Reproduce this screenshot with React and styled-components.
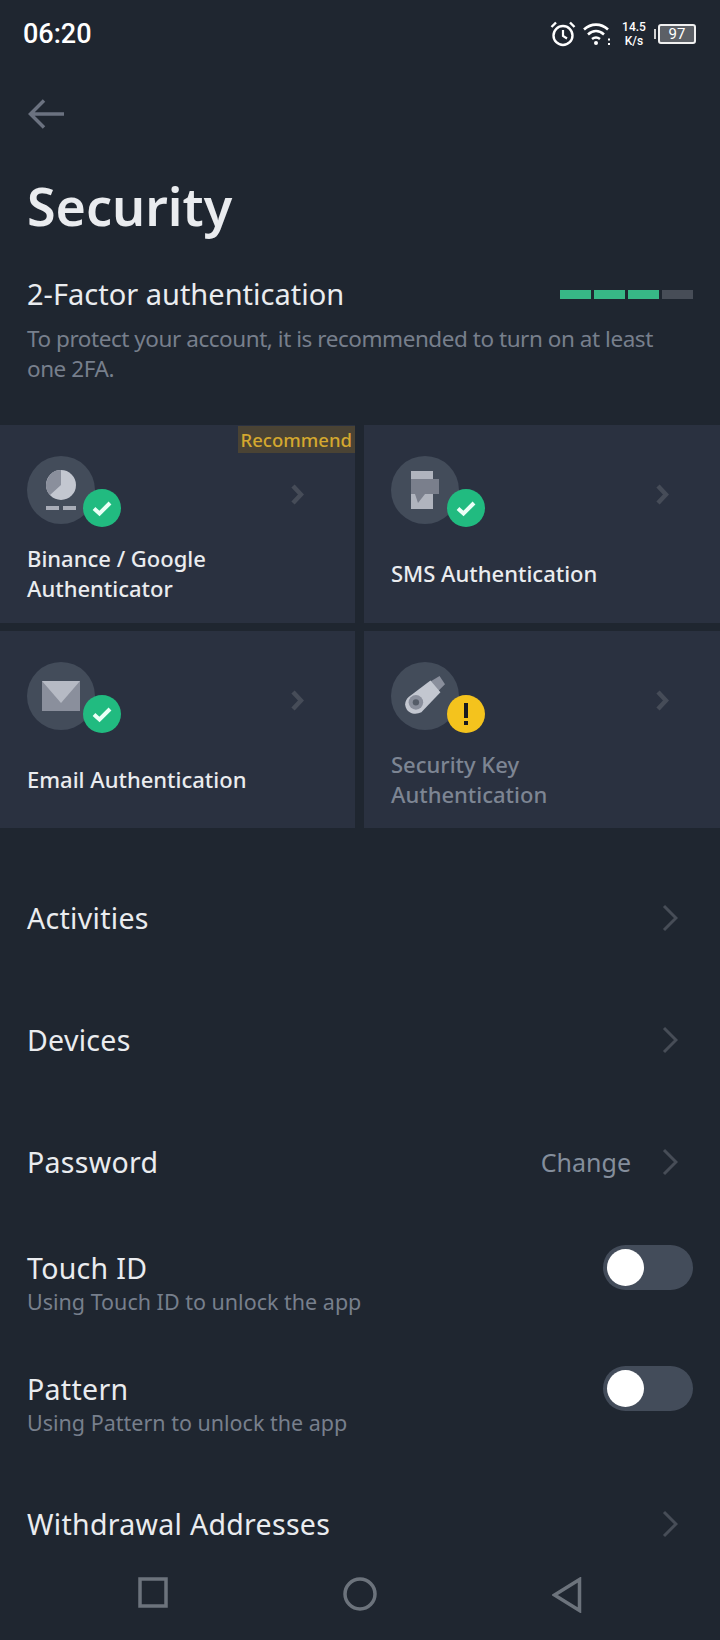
import React from 'react'
import styled, { createGlobalStyle } from 'styled-components'

const GlobalStyle = createGlobalStyle`
  html, body {
    margin: 0;
    padding: 0;
    background: #1f2630;
  }
  * {
    box-sizing: border-box;
  }
`

const Page = styled.div`
  position: relative;
  width: 720px;
  height: 1640px;
  overflow: hidden;
  background: #1f2630;
  color: #eaecef;
  font-family: 'Noto Sans', 'Open Sans', sans-serif;
`

const StatusBar = styled.div`
  display: flex;
  align-items: center;
  justify-content: space-between;
  height: 68px;
  padding: 0 24px 0 23px;
`

const Clock = styled.span`
  font-family: Roboto, sans-serif;
  font-size: 27px;
  font-weight: 500;
  color: #fff;
`

const StatusIcons = styled.div`
  display: flex;
  align-items: center;
  gap: 7px;
`

const Speed = styled.div`
  display: flex;
  flex-direction: column;
  align-items: center;
  width: 26px;
  margin: 0 4px 0 3px;
  font-family: Roboto, sans-serif;
  font-size: 12px;
  font-weight: 500;
  line-height: 14px;
  color: #fff;
`

const Battery = styled.div`
  position: relative;
  display: flex;
  align-items: center;
  justify-content: center;
  width: 38px;
  height: 20px;
  border: 2px solid #f0f0f0;
  border-radius: 3px;
  background: #5c6066;
  font-family: Roboto, sans-serif;
  font-size: 15px;
  color: #fff;

  &::before {
    content: '';
    position: absolute;
    left: -6px;
    top: 3px;
    width: 2px;
    height: 10px;
    background: #d0d0d0;
  }
`

const BackButton = styled.div`
  display: flex;
  align-items: center;
  height: 60px;
  margin-top: 16px;
  padding-left: 28px;
`

const Title = styled.h1`
  margin: 30px 0 0;
  padding-left: 27px;
  font-size: 52px;
  font-weight: 600;
  line-height: 64px;
  color: #eaecef;
`

const SectionHead = styled.div`
  display: flex;
  align-items: center;
  justify-content: space-between;
  margin-top: 36px;
  padding: 0 27px;
`

const SectionTitle = styled.span`
  font-size: 29px;
  line-height: 40px;
  color: #eaecef;
`

const Progress = styled.div`
  display: flex;
  gap: 3px;
`

const Step = styled.span`
  width: 31px;
  height: 9px;
  background: ${(p) => (p.$on ? '#37b886' : '#474d57')};
`

const Description = styled.p`
  margin: 10px 0 0;
  padding: 0 27px;
  font-size: 22.5px;
  letter-spacing: -0.45px;
  line-height: 30px;
  color: #777f8c;
`

const CardGrid = styled.div`
  display: grid;
  grid-template-columns: 355px 356px;
  grid-auto-rows: 197.5px;
  gap: 8px 9px;
  margin-top: 41px;
`

const Card = styled.div`
  position: relative;
  padding: 31px 0 0 27px;
  background: #2a3140;
`

const Recommend = styled.span`
  position: absolute;
  top: 1px;
  right: 0;
  padding: 0 3px;
  font-size: 18.5px;
  line-height: 27px;
  font-weight: 500;
  color: #d4a82f;
  background: #4a4334;
`

const IconWrap = styled.div`
  position: relative;
  width: 68px;
  height: 68px;
  border-radius: 50%;
  background: #434c5a;
  display: flex;
  align-items: center;
  justify-content: center;
`

const Badge = styled.div`
  position: absolute;
  left: 56px;
  top: 33px;
  width: 38px;
  height: 38px;
  border-radius: 50%;
  display: flex;
  align-items: center;
  justify-content: center;
  background: ${(p) => (p.$warn ? '#f4c31d' : '#21bb80')};
`

const CardChevron = styled.svg`
  position: absolute;
  top: 59px;
  right: 51px;
  width: 14px;
  height: 21px;
`

const CardText = styled.div`
  display: flex;
  align-items: center;
  width: 250px;
  height: 60px;
  margin-top: 19px;
  font-size: 22px;
  font-weight: 500;
  line-height: 30px;
  color: ${(p) => (p.$muted ? '#7d8593' : '#eaecef')};
`

const List = styled.div`
  display: flex;
  flex-direction: column;
  margin-top: 29px;
`

const Row = styled.div`
  display: flex;
  align-items: center;
  justify-content: space-between;
  height: ${(p) => p.$height || 122}px;
  padding: 0 27px;
`

const ToggleRow = styled(Row)`
  align-items: flex-start;
  padding-top: 27px;
`

const RowLabel = styled.div`
  font-size: 28.5px;
  letter-spacing: 0.3px;
  line-height: 36px;
  color: #eaecef;
`

const RowHint = styled.div`
  margin-top: 1px;
  font-size: 21.5px;
  line-height: 30px;
  color: #777f8c;
`

const RowEnd = styled.div`
  display: flex;
  align-items: center;
  gap: 31px;
  padding-right: 15px;
  font-size: 25px;
  color: #848e9c;
`

const RowChevron = styled.svg`
  width: 16px;
  height: 28px;
`

const Toggle = styled.div`
  display: flex;
  align-items: center;
  width: 90px;
  height: 45px;
  margin-top: -5px;
  padding-left: 4px;
  border-radius: 23px;
  background: #434c5a;

  &::before {
    content: '';
    width: 37px;
    height: 37px;
    border-radius: 50%;
    background: #fff;
  }
`

const NavBar = styled.div`
  position: absolute;
  left: 0;
  right: 0;
  bottom: 0;
  height: 88px;
  display: flex;
  align-items: flex-start;
  justify-content: space-between;
  padding: 25px 138px 0 138px;
  background: #1f2630;
`

const Check = () => (
  <svg width='22' height='18' viewBox='0 0 22 18' fill='none'>
    <path d='M3 9.5l5.5 5L19 4' stroke='#eafff6' strokeWidth='4' />
  </svg>
)

const Alert = () => (
  <svg width='8' height='24' viewBox='0 0 8 24'>
    <rect x='2' y='1' width='4' height='15' fill='#181a20' />
    <rect x='2' y='19' width='4' height='4' fill='#181a20' />
  </svg>
)

const AuthenticatorIcon = () => (
  <svg width='30' height='40' viewBox='0 0 30 40'>
    <circle cx='15' cy='15' r='15' fill='#c3c7d0' />
    <path d='M15 0a15 15 0 0 0-11 25l11-10z' fill='#8a8f9c' />
    <rect x='0' y='36' width='13' height='4' fill='#a9adb8' />
    <rect x='17' y='36' width='13' height='4' fill='#a9adb8' />
  </svg>
)

const SmsIcon = () => (
  <svg width='28' height='38' viewBox='0 0 28 38'>
    <rect x='0' y='0' width='22' height='38' fill='#b0b4be' />
    <rect x='0' y='8' width='28' height='15' fill='#7a7f8c' />
    <path d='M4 23h10l-7 9z' fill='#7a7f8c' />
  </svg>
)

const MailIcon = () => (
  <svg width='38' height='30' viewBox='0 0 38 30'>
    <rect width='38' height='30' fill='#8a8f9c' />
    <path d='M0 0h38L19 22z' fill='#b6bac4' />
  </svg>
)

const KeyIcon = () => (
  <svg width='40' height='40' viewBox='0 0 44 44'>
    <path d='M28 6l10-6 6 9-8 8z' fill='#8a8f9c' />
    <path d='M28 5l11 13-21 22c-6 3-14 2-17-5-2-5 0-9 3-12z' fill='#c3c7d0' />
    <circle cx='12' cy='29' r='8' fill='#8a8f9c' />
    <circle cx='12' cy='29' r='3.5' fill='#555c68' />
  </svg>
)

const cards = [
  { label: 'Binance / Google Authenticator', Icon: AuthenticatorIcon, recommend: true },
  { label: 'SMS Authentication', Icon: SmsIcon },
  { label: 'Email Authentication', Icon: MailIcon },
  { label: 'Security Key Authentication', Icon: KeyIcon, warn: true },
]

const ChevronSmall = () => (
  <CardChevron viewBox='0 0 14 21' fill='none'>
    <path d='M3 2l8 8.500L3 19' stroke='#464c58' strokeWidth='4.5' />
  </CardChevron>
)

const ChevronThin = () => (
  <RowChevron viewBox='0 0 16 28' fill='none'>
    <path d='M2 2l12 12L2 26' stroke='#474d57' strokeWidth='3' />
  </RowChevron>
)

const App = () => {
  return (
    <Page>
      <GlobalStyle />
      <StatusBar>
        <Clock>06:20</Clock>
        <StatusIcons>
          <svg width='26' height='26' viewBox='0 0 26 26' fill='none' stroke='#fff'>
            <circle cx='13' cy='14.5' r='9.5' strokeWidth='2.4' />
            <path d='M13 9v6l4 2.500' strokeWidth='2.2' />
            <path d='M1.500 6L6 1.500M24.500 6L20 1.500' strokeWidth='2.4' />
          </svg>
          <svg width='28' height='24' viewBox='0 0 28 24' fill='none' stroke='#fff'>
            <path d='M1 7.500c7-6.500 17-6.500 24 0' strokeWidth='2.6' />
            <path d='M5 12.500c5-4.500 11-4.500 16 0' strokeWidth='2.6' />
            <path d='M9 17c2.700-2 5.300-2 8 0' strokeWidth='2.6' />
            <circle cx='13' cy='21' r='2' fill='#fff' stroke='none' />
            <path d='M26 16.500v2M26 21v2' strokeWidth='2' />
          </svg>
          <Speed>
            <span>14.5</span>
            <span>K/s</span>
          </Speed>
          <Battery>97</Battery>
        </StatusIcons>
      </StatusBar>

      <BackButton>
        <svg width='36' height='30' viewBox='0 0 36 30' fill='none' stroke='#6b7280' strokeWidth='3.5'>
          <path d='M36 15H3M16 1.500L2.500 15 16 28.500' />
        </svg>
      </BackButton>

      <Title>Security</Title>

      <SectionHead>
        <SectionTitle>2-Factor authentication</SectionTitle>
        <Progress>
          <Step $on />
          <Step $on />
          <Step $on />
          <Step />
        </Progress>
      </SectionHead>
      <Description>To protect your account, it is recommended to turn on at least one 2FA.</Description>

      <CardGrid>
        {cards.map(({ label, Icon, recommend, warn }) => (
          <Card key={label}>
            {recommend && <Recommend>Recommend</Recommend>}
            <IconWrap>
              <Icon />
              <Badge $warn={warn}>{warn ? <Alert /> : <Check />}</Badge>
            </IconWrap>
            <ChevronSmall />
            <CardText $muted={warn}>
              <span>{label}</span>
            </CardText>
          </Card>
        ))}
      </CardGrid>

      <List>
        <Row>
          <RowLabel>Activities</RowLabel>
          <RowEnd>
            <ChevronThin />
          </RowEnd>
        </Row>
        <Row>
          <RowLabel>Devices</RowLabel>
          <RowEnd>
            <ChevronThin />
          </RowEnd>
        </Row>
        <Row>
          <RowLabel>Password</RowLabel>
          <RowEnd>
            Change
            <ChevronThin />
          </RowEnd>
        </Row>
        <ToggleRow $height={121}>
          <div>
            <RowLabel>Touch ID</RowLabel>
            <RowHint>Using Touch ID to unlock the app</RowHint>
          </div>
          <Toggle />
        </ToggleRow>
        <ToggleRow $height={121}>
          <div>
            <RowLabel>Pattern</RowLabel>
            <RowHint>Using Pattern to unlock the app</RowHint>
          </div>
          <Toggle />
        </ToggleRow>
        <Row $height={118}>
          <RowLabel>Withdrawal Addresses</RowLabel>
          <RowEnd>
            <ChevronThin />
          </RowEnd>
        </Row>
      </List>

      <NavBar>
        <svg width='30' height='32' viewBox='0 0 30 32' fill='none' stroke='#6c737c' strokeWidth='3.5'>
          <rect x='2' y='2' width='26' height='27' />
        </svg>
        <svg width='34' height='34' viewBox='0 0 34 34' fill='none' stroke='#6c737c' strokeWidth='3.5'>
          <circle cx='17' cy='17' r='15' />
        </svg>
        <svg width='30' height='36' viewBox='0 0 30 36' fill='none' stroke='#6c737c' strokeWidth='3.5'>
          <path d='M27.500 2.500v31L2.500 18z' />
        </svg>
      </NavBar>
    </Page>
  )
}

export default App
